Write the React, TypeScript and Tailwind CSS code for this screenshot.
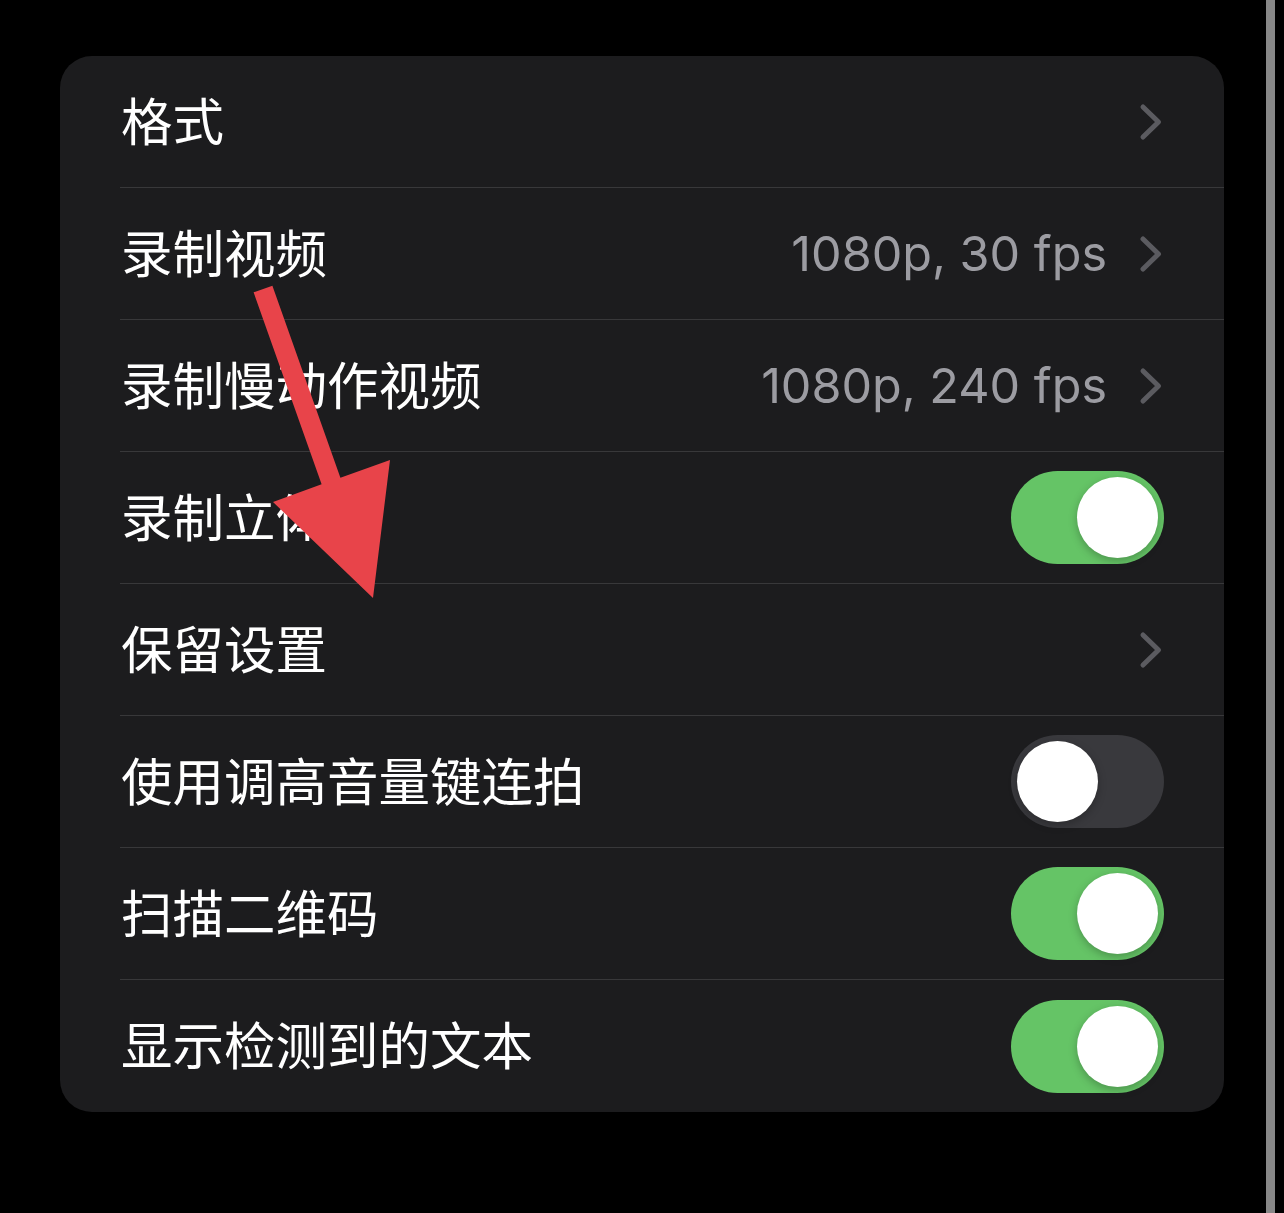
import React from "react";

type Row =
  | { kind: "link"; label: string; value?: string }
  | { kind: "toggle"; label: string; on: boolean };

const ROWS: Row[] = [
  { kind: "link", label: "格式" },
  { kind: "link", label: "录制视频", value: "1080p, 30 fps" },
  { kind: "link", label: "录制慢动作视频", value: "1080p, 240 fps" },
  { kind: "toggle", label: "录制立体", on: true },
  { kind: "link", label: "保留设置" },
  { kind: "toggle", label: "使用调高音量键连拍", on: false },
  { kind: "toggle", label: "扫描二维码", on: true },
  { kind: "toggle", label: "显示检测到的文本", on: true },
];

const FONT = { fontFamily: 'Inter, "Noto Sans CJK SC", sans-serif' };

function Chevron() {
  return (
    <svg width="24" height="40" viewBox="0 0 24 40" className="shrink-0" aria-hidden>
      <path
        d="M4 5 L19.5 20 L4 35"
        fill="none"
        stroke="#5b5b60"
        strokeWidth="5"
        strokeLinecap="round"
        strokeLinejoin="round"
      />
    </svg>
  );
}

function Toggle({ on }: { on: boolean }) {
  return (
    <div
      className={`flex h-[93px] w-[153px] shrink-0 items-center rounded-full p-[6px] ${
        on ? "justify-end bg-[#65c466]" : "justify-start bg-[#39393d]"
      }`}
    >
      <div className="h-[81px] w-[81px] rounded-full bg-white shadow-[0_3px_8px_rgba(0,0,0,0.25)]" />
    </div>
  );
}

export default function App() {
  return (
    <div className="flex h-[1213px] w-full bg-black" style={FONT}>
      <div className="relative w-[1266px] pl-[60px] pt-[56px]">
        <div className="w-[1164px] overflow-hidden rounded-[32px] bg-[#1c1c1e]">
          {ROWS.map((row, i) => (
            <div key={row.label} className="flex h-[132px] pl-[60px]">
              <div
                className={`flex flex-1 items-center ${
                  i < ROWS.length - 1 ? "border-b border-[#38383a]" : ""
                } ${row.kind === "toggle" ? "pr-[60px]" : "pr-[61px]"}`}
              >
                <span className="flex-1 pl-[1px] pt-[2px] text-[51.5px] leading-none text-white">
                  {row.label}
                </span>
                {row.kind === "link" ? (
                  <div className="flex items-center gap-[32px]">
                    {row.value && (
                      <span className="pt-[2px] text-[48.5px] leading-none text-[#9c9ca2]">
                        {row.value}
                      </span>
                    )}
                    <Chevron />
                  </div>
                ) : (
                  <Toggle on={row.on} />
                )}
              </div>
            </div>
          ))}
        </div>
        <svg
          className="pointer-events-none absolute left-0 top-0"
          width="1266"
          height="1213"
          aria-hidden
        >
          <polygon
            points="253.6,292.3 272.4,285.7 340.4,477.7 390,460 373,598 273,502 321.6,484.3"
            fill="#e8444a"
          />
        </svg>
      </div>
      <div className="h-full w-[9px] bg-[#888888]" />
      <div className="flex-1" />
    </div>
  );
}
